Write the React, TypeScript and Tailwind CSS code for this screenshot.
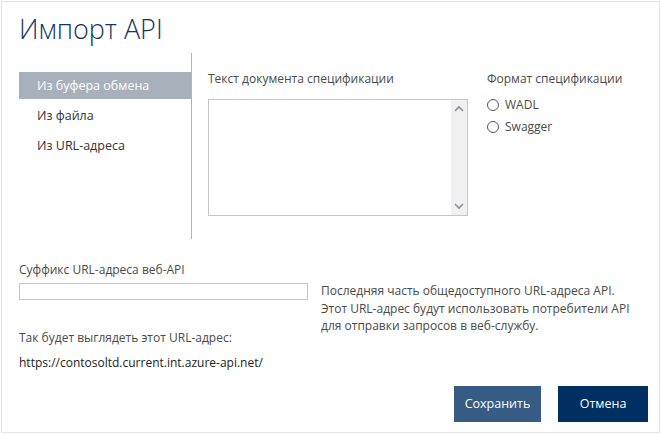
import { useState } from 'react';

export default function App() {
  const [tab, setTab] = useState(0);
  const [format, setFormat] = useState('');

  const tabs = ['Из буфера обмена', 'Из файла', 'Из URL-адреса'];

  return (
    <div className="p-px bg-white" style={{ fontFamily: '"Open Sans", "Noto Sans", sans-serif' }}>
      <div className="w-[659px] h-[432px] border border-[#e4e4e4] bg-white flex flex-col text-[12px] text-[#4a4a4a]">
        {/* TITLE */}
        <h1 className="pl-[17px] pt-[9px] h-[51px] text-[27px] font-light leading-[36px] text-[#133566]">
          Импорт API
        </h1>

        {/* TOP PART */}
        <div className="flex h-[186px]">
          {/* LEFT NAV */}
          <div className="w-[190px] pl-[17px] pt-[19px] border-r border-[#b4b4b4] flex flex-col gap-[3px]">
            {tabs.map((t, i) => (
              <button
                key={t}
                onClick={() => setTab(i)}
                className={`h-[27px] pl-[18px] pt-[2px] text-left text-[12.5px] ${
                  tab === i ? 'bg-[#a8b0bc] text-white' : 'text-[#333]'
                }`}
              >
                {t}
              </button>
            ))}
          </div>

          {/* DOCUMENT TEXT */}
          <div className="pl-[16px] pt-[17px] w-[277px]">
            <div className="h-[29px]">Текст документа спецификации</div>
            <div className="flex h-[117px] w-[260px] border border-[#c6c6c6]">
              <textarea className="flex-1 resize-none outline-none" />
              <div className="w-[16px] bg-[#f0f0f0] flex flex-col items-center justify-between py-[5px]">
                <svg width="10" height="7" viewBox="0 0 10 7">
                  <path d="M1 6 L5 2 L9 6" fill="none" stroke="#8a8f99" strokeWidth="1.6" />
                </svg>
                <svg width="10" height="7" viewBox="0 0 10 7">
                  <path d="M1 1 L5 5 L9 1" fill="none" stroke="#8a8f99" strokeWidth="1.6" />
                </svg>
              </div>
            </div>
          </div>

          {/* FORMAT */}
          <div className="pl-[18px] pt-[17px]">
            <div className="h-[19px]">Формат спецификации</div>
            <div className="flex flex-col gap-[3px] pt-[6px]">
              {['WADL', 'Swagger'].map((f) => (
                <label key={f} className="flex items-center gap-[6px] h-[19px] cursor-pointer">
                  <span
                    onClick={() => setFormat(f)}
                    className="w-[12px] h-[12px] rounded-full border border-[#555] flex items-center justify-center"
                  >
                    {format === f && <span className="w-[6px] h-[6px] rounded-full bg-[#333]" />}
                  </span>
                  {f}
                </label>
              ))}
            </div>
          </div>
        </div>

        {/* SUFFIX */}
        <div className="pl-[17px] pt-[22px] flex flex-col">
          <div className="h-[22px]">Суффикс URL-адреса веб-API</div>
          <div className="flex gap-[13px]">
            <input className="w-[289px] h-[17px] border border-[#c6c6c6] outline-none" />
            <p className="leading-[17.5px] -mt-[1px]">
              Последняя часть общедоступного URL-адреса API.
              <br />
              Этот URL-адрес будут использовать потребители API
              <br />
              для отправки запросов в веб-службу.
            </p>
          </div>
          <div className="mt-[-6px] h-[25px]">Так будет выглядеть этот URL-адрес:</div>
          <div className="text-[#222]">https://contosoltd.current.int.azure-api.net/</div>
        </div>

        {/* BUTTONS */}
        <div className="flex justify-end gap-[17px] pr-[11px] mt-auto mb-[10px]">
          <button className="w-[87px] h-[36px] bg-[#365b84] text-white text-[12.5px]">Сохранить</button>
          <button className="w-[90px] h-[36px] bg-[#002f62] text-white text-[12.5px]">Отмена</button>
        </div>
      </div>
    </div>
  );
}
